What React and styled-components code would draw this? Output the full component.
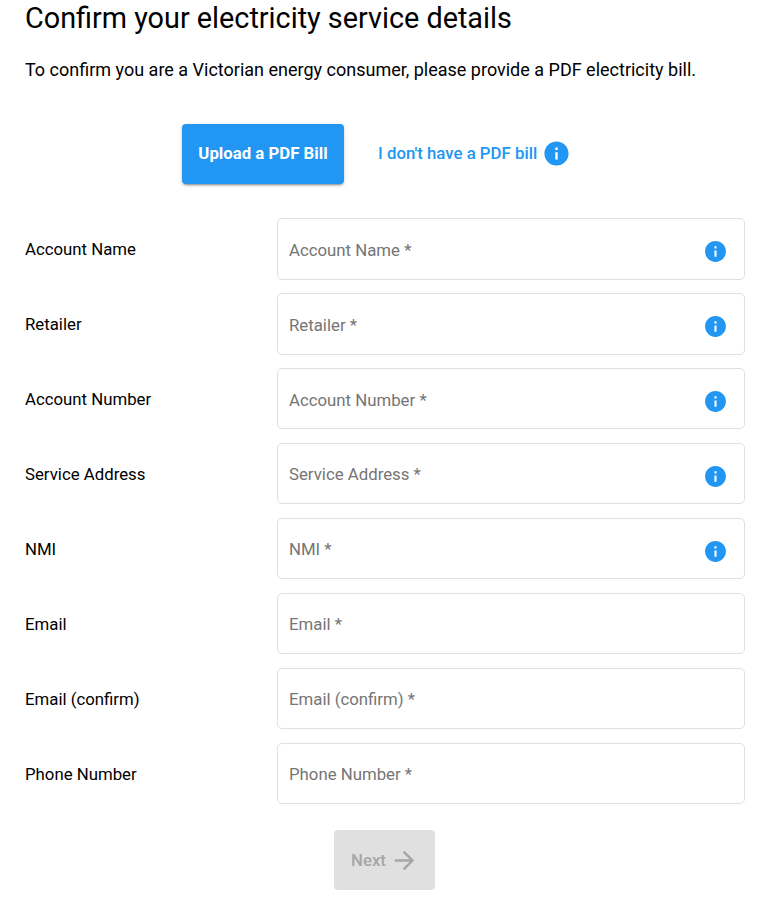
import React from 'react';
import styled, { createGlobalStyle } from 'styled-components';

const GlobalStyle = createGlobalStyle`
  body {
    margin: 0;
    background: #fff;
    font-family: Roboto, "Liberation Sans", sans-serif;
    color: #000;
  }
`;

const Page = styled.main`
  width: 765px;
  height: 913px;
  box-sizing: border-box;
  padding: 0 20px 0 25px;
  overflow: hidden;
`;

const Title = styled.h1`
  margin: 0;
  font-size: 28.8px;
  font-weight: 400;
  line-height: 36px;
`;

const Intro = styled.p`
  margin: 22px 0 0;
  font-size: 18px;
  line-height: 24px;
`;

const UploadRow = styled.div`
  display: flex;
  align-items: center;
  margin: 42px 0 34.3px 157px;
`;

const UploadButton = styled.button`
  width: 162px;
  height: 60px;
  padding: 0 0 2px;
  border: 0;
  border-radius: 4px;
  background: #2196f3;
  color: #fff;
  font: 700 16.8px Roboto, sans-serif;
  box-shadow: 0 3px 1px -2px rgba(0, 0, 0, 0.2), 0 2px 2px rgba(0, 0, 0, 0.14), 0 1px 5px rgba(0, 0, 0, 0.12);
`;

const NoBillLink = styled.a`
  display: flex;
  align-items: center;
  gap: 5px;
  margin: 0 0 2px 34px;
  color: #2196f3;
  font-size: 16.8px;
  font-weight: 500;
`;

const Form = styled.form`
  display: flex;
  flex-direction: column;
  gap: 13.7px;
`;

const Row = styled.div`
  display: grid;
  grid-template-columns: 252px 468px;
  height: 61.27px;
`;

const Label = styled.label`
  padding-top: 21px;
  font-size: 16.8px;
  line-height: 20px;
`;

const Field = styled.div`
  display: flex;
  align-items: center;
  justify-content: space-between;
  box-sizing: border-box;
  padding: 1.4px 16px 0 11px;
  border: 1px solid #e0e0e0;
  border-radius: 5px;
  color: #757575;
  font-size: 16.8px;
`;

const FieldIcon = styled.span`
  display: flex;
  margin-top: 3.3px;
`;

const Footer = styled.div`
  display: flex;
  justify-content: center;
  margin: 26px 0 0 -1px;
`;

const NextButton = styled.button`
  display: flex;
  align-items: center;
  justify-content: center;
  gap: 4px;
  width: 101px;
  height: 60px;
  padding: 0 0 0 1px;
  border: 0;
  border-radius: 4px;
  background: #e0e0e0;
  color: #a6a6a6;
  font: 500 16.8px Roboto, sans-serif;
`;

const InfoIcon = ({ size }) => (
  <svg width={size} height={size} viewBox="0 0 24 24" fill="#2196f3">
    <path d="M12 2C6.48 2 2 6.48 2 12s4.48 10 10 10 10-4.48 10-10S17.52 2 12 2zm1 15h-2v-6h2v6zm0-8h-2V7h2v2z" />
  </svg>
);

const ArrowIcon = () => (
  <svg width="29" height="29" viewBox="0 0 24 24" fill="#a6a6a6">
    <path d="M12 4l-1.41 1.41L16.17 11H4v2h12.17l-5.58 5.59L12 20l8-8z" />
  </svg>
);

const fields = [
  { name: 'Account Name', info: true },
  { name: 'Retailer', info: true },
  { name: 'Account Number', info: true },
  { name: 'Service Address', info: true },
  { name: 'NMI', info: true },
  { name: 'Email' },
  { name: 'Email (confirm)' },
  { name: 'Phone Number' },
];

const App = () => {
  return (
    <Page>
      <GlobalStyle />
      <Title>Confirm your electricity service details</Title>
      <Intro>To confirm you are a Victorian energy consumer, please provide a PDF electricity bill.</Intro>
      <UploadRow>
        <UploadButton type="button">Upload a PDF Bill</UploadButton>
        <NoBillLink>
          I don't have a PDF bill
          <InfoIcon size={29} />
        </NoBillLink>
      </UploadRow>
      <Form>
        {fields.map((field) => (
          <Row key={field.name}>
            <Label>{field.name}</Label>
            <Field>
              {field.name} *
              {field.info && (
                <FieldIcon>
                  <InfoIcon size={25} />
                </FieldIcon>
              )}
            </Field>
          </Row>
        ))}
      </Form>
      <Footer>
        <NextButton type="button" disabled>
          Next
          <ArrowIcon />
        </NextButton>
      </Footer>
    </Page>
  );
};

export default App;
